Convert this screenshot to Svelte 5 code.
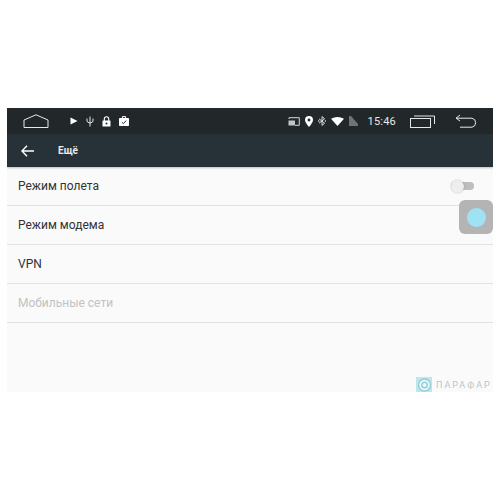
<script>
	const rows = [
		{ label: 'Режим полета', toggle: true },
		{ label: 'Режим модема' },
		{ label: 'VPN' },
		{ label: 'Мобильные сети', disabled: true }
	];
</script>

<div class="page">
	<div class="screen">
		<header class="status">
			<div class="left">
				<svg class="home" width="26" height="14" viewBox="0 0 26 14" fill="none" stroke="#e8e8e8" stroke-width="1">
					<path d="M1 6 L13 .8 L25 6 V13.5 H1 Z" />
				</svg>
				<div class="left-icons">
					<svg width="8" height="8" viewBox="0 0 8 8"><path d="M0.5 0.5 L7.5 4 L0.5 7.5 Z" fill="#fff" /></svg>
					<svg width="8" height="11" viewBox="0 0 8 11" fill="none" stroke="#e4e4e4" stroke-width="1">
						<path d="M4 0.5 V10.5 M1 2.5 V5 Q1 6.5 4 7 Q7 6.5 7 5 V2.5" />
					</svg>
					<svg width="9" height="11" viewBox="0 0 9 11">
						<path d="M2.3 5 V3 a2.2 2.2 0 0 1 4.4 0 V5" fill="none" stroke="#fff" stroke-width="1.1" />
						<rect x="0.5" y="4.5" width="8" height="6" rx="0.6" fill="#fff" />
						<circle cx="4.5" cy="7.5" r="1" fill="#22282a" />
					</svg>
					<svg width="10" height="10" viewBox="0 0 10 10">
						<rect x="0" y="2" width="10" height="8" rx="0.7" fill="#fff" />
						<path d="M3.4 2 V.6 H6.6 V2" fill="none" stroke="#fff" stroke-width="1" />
						<path d="M2.8 6.2 L4.3 7.6 L7.2 4.6" fill="none" stroke="#22282a" stroke-width="1" />
					</svg>
				</div>
			</div>
			<div class="right">
				<div class="right-icons">
					<svg width="12" height="9" viewBox="0 0 12 9">
						<path d="M1 2 V.7 H11.3 V8.3 H7" fill="none" stroke="#d8d8d8" stroke-width="1" />
						<path d="M0.5 3.5 H7 V8.5 H0.5 Z" fill="#c4c4c4" />
					</svg>
					<svg width="8" height="11" viewBox="0 0 8 11">
						<path fill-rule="evenodd" d="M4 0 a4 4 0 0 1 4 4 C8 6.6 4 11 4 11 S0 6.6 0 4 a4 4 0 0 1 4-4 Z M4 2.6 a1.4 1.4 0 1 0 0 2.8 a1.4 1.4 0 0 0 0-2.8 Z" fill="#fff" />
					</svg>
					<svg width="8" height="10" viewBox="0 0 8 10" fill="none" stroke="#dcdcdc" stroke-width="1">
						<path d="M1 2.8 L6.6 7.2 L4 9.4 V.6 L6.6 2.8 L1 7.2" />
						<circle cx="0.8" cy="5" r="0.4" />
						<circle cx="7.4" cy="5" r="0.4" />
					</svg>
					<svg width="13" height="9" viewBox="0 0 13 9"><path d="M0 1.8 Q6.5 -1.6 13 1.8 L6.5 9 Z" fill="#fff" /></svg>
					<svg width="9" height="10" viewBox="0 0 9 10"><path d="M0 0 H2 L9 8 V10 H0 Z" fill="#6e7375" /></svg>
				</div>
				<span class="time">15:46</span>
				<svg class="recents" width="25" height="14" viewBox="0 0 25 14" fill="none" stroke="#e8e8e8" stroke-width="1">
					<rect x="0.5" y="4.5" width="20" height="9" />
					<path d="M4 2 H24.5 V10" />
				</svg>
				<svg class="back" width="23" height="14" viewBox="0 0 23 14" fill="none" stroke="#e8e8e8" stroke-width="1">
					<path d="M5 1 L1 4.2 L5 7 M1 4.2 H17 a4.6 4.6 0 0 1 0 9 H5" />
				</svg>
			</div>
		</header>

		<div class="appbar">
			<svg width="13" height="12" viewBox="0 0 13 12" fill="none" stroke="#fff" stroke-width="1.4">
				<path d="M6 .8 L1 6 L6 11.2 M1 6 H13" />
			</svg>
			<span class="title">Ещё</span>
		</div>

		<div class="list">
			{#each rows as row (row.label)}
				<div class="row" class:disabled={row.disabled}>
					<span>{row.label}</span>
					{#if row.toggle}
						<div class="switch"><div class="thumb"></div></div>
					{/if}
				</div>
			{/each}
		</div>

		<div class="assist"><div class="assist-dot"></div></div>

		<div class="brand">
			<svg width="16" height="16" viewBox="0 0 16 16" fill="none">
				<rect width="16" height="16" fill="#bfe6ea" />
				<circle cx="8.5" cy="8" r="6" stroke="#8fd0d8" stroke-width="1.4" fill="#eef9fa" />
				<circle cx="8.5" cy="8" r="2.8" stroke="#8fd0d8" stroke-width="1.4" />
			</svg>
			<span>ПАРАФАР</span>
		</div>
	</div>
</div>

<style>
	:global(body) {
		background: #fff;
	}

	.page {
		height: 500px;
		padding: 108px 7px 0;
		box-sizing: border-box;
		font-family: Roboto, 'Noto Sans', sans-serif;
	}

	.screen {
		position: relative;
		height: 284px;
		background: #fafafa;
		overflow: hidden;
	}

	.status {
		height: 26px;
		background: #22282a;
		display: flex;
		justify-content: space-between;
		align-items: center;
		padding: 0 15px 0 16px;
	}

	.left,
	.right,
	.left-icons,
	.right-icons {
		display: flex;
		align-items: center;
	}

	.left-icons {
		margin-left: 21px;
		gap: 8px;
	}

	.right-icons {
		gap: 5px;
	}

	.time {
		margin-left: 10px;
		color: #e6e6e6;
		font-size: 11px;
		letter-spacing: 0.2px;
	}

	.recents {
		margin-left: 14px;
	}

	.back {
		margin-left: 20px;
	}

	.appbar {
		height: 33px;
		background: #263238;
		display: flex;
		align-items: center;
		padding-left: 14px;
		box-shadow: 0 1px 2px rgba(0, 0, 0, 0.25);
		position: relative;
	}

	.title {
		margin-left: 24px;
		color: #e8ecec;
		font-size: 10px;
		font-weight: 700;
	}

	.row {
		height: 39px;
		box-sizing: border-box;
		border-bottom: 1px solid #e2e2e2;
		padding: 0 19px 0 11px;
		display: flex;
		align-items: center;
		justify-content: space-between;
		font-size: 12px;
		color: #333;
	}

	.row.disabled {
		color: #c2c2c2;
	}

	.switch {
		width: 23px;
		height: 8px;
		border-radius: 4px;
		background: #bdbdbd;
		display: flex;
		align-items: center;
	}

	.thumb {
		width: 13px;
		height: 13px;
		border-radius: 50%;
		background: #eeeeee;
		box-shadow: 0 0 2px rgba(0, 0, 0, 0.25);
	}

	.assist {
		position: absolute;
		left: 452px;
		top: 92px;
		width: 34px;
		height: 34px;
		border-radius: 6px;
		background: #b4b4b4;
		display: flex;
		align-items: center;
		justify-content: center;
	}

	.assist-dot {
		width: 19px;
		height: 19px;
		border-radius: 50%;
		background: #9fe2f4;
	}

	.brand {
		position: absolute;
		left: 409px;
		top: 269px;
		display: flex;
		align-items: center;
		gap: 4px;
		color: #b9c4c8;
		font-size: 9px;
		letter-spacing: 2px;
		white-space: nowrap;
	}
</style>
